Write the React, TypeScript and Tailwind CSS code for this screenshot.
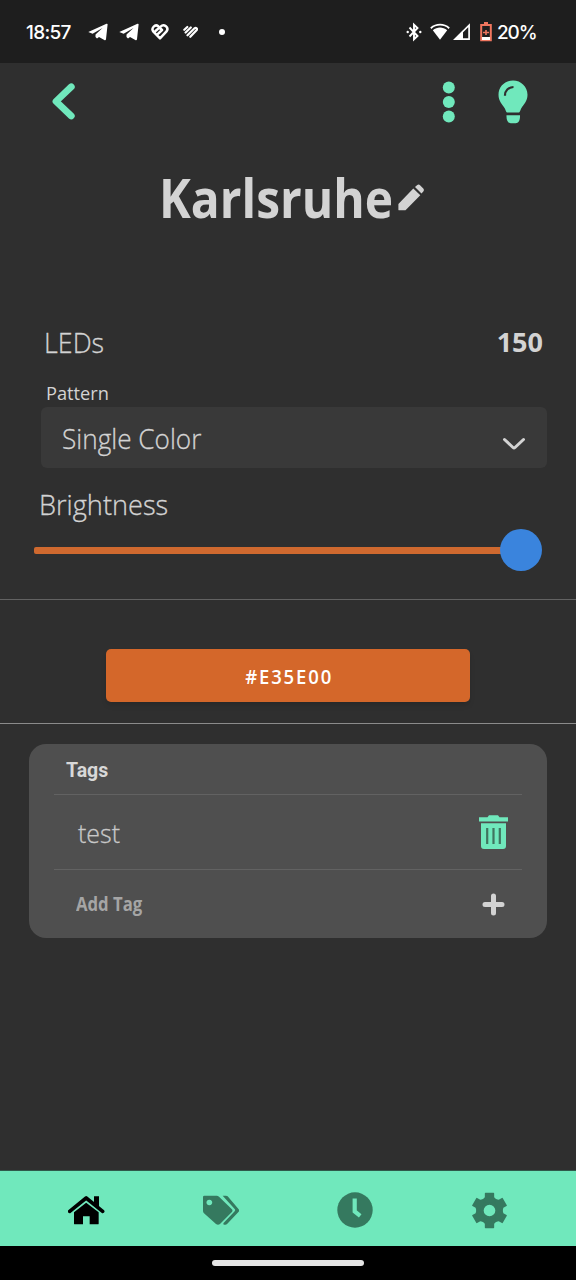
import React from "react";

const Telegram = () => (
  <svg className="h-[18px] w-[20px] shrink-0" viewBox="0 0 20 18" fill="#fff">
    <path d="M.3 9 18.500.8c.8-.3 1.200.2 1.100.8L18 16.300c-.2 1-1 1.200-1.700.7L11 14 9 15.500 7.500 14V11.500L14.500 5 4.600 10.800Z" />
  </svg>
);

function StatusBar() {
  return (
    <header className="flex h-[63px] shrink-0 items-center bg-[#1e1e1e] pl-[26px] pt-px font-['Inter'] text-[19px] font-medium leading-none text-white">
      <span className="w-[62px] tracking-[-0.7px]">18:57</span>
      <Telegram />
      <div className="w-[11px]" />
      <Telegram />
      <svg className="ml-[12px] h-[18px] w-[18px]" viewBox="0 0 18 18" fill="none" stroke="#fff" strokeWidth="2.500" strokeLinecap="round" strokeLinejoin="round">
        <path d="M9 15.300 2.400 8.700C-.3 5.300 4 .7 7.300 3.300L11 7 7 10.800M4.500 8 9.600 3.600c3.400-3.300 8.800 1 5.900 4.800L9 15.300" />
      </svg>
      <svg className="ml-[14px] h-[14px] w-[15px]" viewBox="0 0 15 14" fill="none" stroke="#fff" strokeWidth="2.200" strokeLinecap="round">
        <path d="M1.300 4.800 4.300 2M2.600 7.500 7.800 2.500M4.500 10.300 11.500 3.300c1.600-1.200 3.200.6 2 2L7.300 11.800" />
      </svg>
      <span className="ml-[21px] h-[6px] w-[6px] rounded-full bg-white" />
      <svg className="ml-[181px] h-[20px] w-[16px]" viewBox="0 0 16 20" fill="none" stroke="#fff" strokeWidth="1.900">
        <path d="m3.500 5.500 8 8.500L8 17.300V2.700L11.500 6l-8 8.500" />
        <circle cx="1.700" cy="10" r="1.200" fill="#fff" stroke="none" />
        <circle cx="14.300" cy="10" r="1.200" fill="#fff" stroke="none" />
      </svg>
      <svg className="ml-[8px] h-[18px] w-[20px]" viewBox="0 0 20 18">
        <path d="M.8 5.200c5.500-4.700 13-4.700 18.400 0" fill="none" stroke="#fff" strokeWidth="1.800" />
        <path d="M2.800 7.200c4.500-3.500 9.900-3.500 14.400 0L10 16.800Z" fill="#fff" />
      </svg>
      <svg className="ml-[3px] h-[18px] w-[17px]" viewBox="0 0 17 18">
        <path d="M2 16.200H16.100V2.200Z" fill="none" stroke="#fff" strokeWidth="1.700" />
        <path d="M1 16.800 10 7.500v9.300Z" fill="#fff" />
      </svg>
      <svg className="ml-[10px] h-[20px] w-[12px]" viewBox="0 0 12 20">
        <path d="M4 1h4M1.200 3h9.600v15.200H1.200Z" fill="none" stroke="#ef765f" strokeWidth="2" />
        <path d="M2 15h8v3H2Z" fill="#fff" />
        <path d="M3 10.500h6M6 8v5" stroke="#ef765f" strokeWidth="1.600" />
      </svg>
      <span className="ml-[5px] tracking-[-1.100px]">20%</span>
    </header>
  );
}

function Toolbar() {
  return (
    <div className="flex h-[77px] shrink-0 items-center pl-[50px]">
      <svg className="mb-px h-[40px] w-[27px]" viewBox="0 0 27 40" fill="none" stroke="#70e8bc" strokeWidth="6.800" strokeLinecap="round" strokeLinejoin="round">
        <path d="M21.300 5.800 6 20.400 21.300 35" />
      </svg>
      <svg className="ml-[365px] h-[42px] w-[14px]" viewBox="0 0 14 42" fill="#70e8bc">
        <circle cx="6.800" cy="6.500" r="6" />
        <circle cx="6.800" cy="21" r="6" />
        <circle cx="6.800" cy="35.500" r="6" />
      </svg>
      <svg className="ml-[42px] h-[44px] w-[30px]" viewBox="0 0 30 44">
        <path d="M15 .5C6.800.5.5 6.800.5 14.700c0 6.500 3.700 9.300 6.500 14 .9 1.900 1 3.800 2.300 3.800h11.400c1.300 0 1.400-1.900 2.300-3.800 2.800-4.700 6.500-7.500 6.500-14C29.500 6.800 23.200.5 15 .5ZM8.500 35.200h13.500c.3 5-1.600 8-4.300 8h-5c-2.700 0-4.500-3-4.200-8Z" fill="#70e8bc" />
        <path d="M7 15.800c-.2-5 3.500-8.600 8.500-8.800" fill="none" stroke="#2f2f2f" strokeWidth="2.200" />
      </svg>
    </div>
  );
}

function TagsCard() {
  return (
    <section className="ml-[29px] mt-[20px] flex h-[194px] w-[518px] shrink-0 flex-col rounded-[17px] bg-[#4f4f4f] px-[25px]">
      <div className="flex h-[51px] items-center border-b border-[#626262] pl-[12px] pt-[4px] font-['Roboto'] text-[19.500px] font-bold text-[#d8d8d8]">
        <span>Tags</span>
      </div>
      <div className="flex h-[75px] items-center justify-between border-b border-[#626262] pl-[24px] pr-[13px]">
        <span className="mt-px origin-left scale-x-[0.96] text-[26px] font-light text-[#c8c8c8] [-webkit-text-stroke:0.300px_#c8c8c8]">test</span>
        <svg className="mb-[1px] h-[34px] w-[31px]" viewBox="0 0 31 34">
          <path d="M1 2.300h8.500L11 .3h9l1.500 2H30V6.500H1ZM3 8.300h25V31q0 3-3 3H6q-3 0-3-3Z" fill="#70e8bc" />
          <path d="M9.200 13v16M15.500 13v16M21.800 13v16" stroke="#40745f" strokeWidth="2.200" />
        </svg>
      </div>
      <div className="flex h-[68px] items-center justify-between pl-[22px] pr-[17px]">
        <span className="mt-px origin-left scale-x-[0.88] text-[19px] font-bold text-[#a5a5a5]">Add Tag</span>
        <svg className="h-[23px] w-[23px]" viewBox="0 0 23 23" stroke="#d3d3d3" strokeWidth="5">
          <path d="M3 11.500h17M11.500 3v17" strokeLinecap="round" />
        </svg>
      </div>
    </section>
  );
}

const GEAR_ANGLES = [0, 60, 120, 180, 240, 300];

function TabBar() {
  return (
    <nav className="flex h-[76px] shrink-0 items-center border-t border-[#2f5a4b] bg-[#70e8bc] pl-[68px] pt-[3px] text-[#35795f]">
      <svg className="h-[30px] w-[37px] text-black" viewBox="0 0 111 90">
        <path d="M5 49 54.500 9 104 49" fill="none" stroke="currentColor" strokeWidth="11" strokeLinecap="round" strokeLinejoin="round" />
        <path d="M78 4h15v34L78 26ZM18 52 54.500 23 92 52v34q0 2-3 2H65V64H45v24H21q-3 0-3-2Z" fill="currentColor" />
      </svg>
      <svg className="ml-[97px] h-[30px] w-[37px]" viewBox="0 0 111 90" fill="currentColor">
        <path fillRule="evenodd" d="M3 6q0-4 4-4h37q4 0 7 3l38 37q5 5 0 10L54 87q-6 5-12 0L6 55q-3-3-3-7ZM22 14a8.500 8.500 0 1 0 .1 0Z" />
        <path d="M62 2h10q3 0 5 2l33 39q3 4 0 7L76 86q-3 3-6 3h-5l-1-4 34-36q3-4 0-7Z" />
      </svg>
      <svg className="ml-[98px] h-[36px] w-[36px]" viewBox="0 0 36 36">
        <circle cx="18" cy="18" r="17.700" fill="currentColor" />
        <path d="M17.700 6.500v13l5.500 4.300" fill="none" stroke="#70e8bc" strokeWidth="4.200" />
      </svg>
      <svg className="ml-[98px] h-[37px] w-[37px]" viewBox="-55.500 -55.500 111 111">
        <circle r="28" fill="none" stroke="currentColor" strokeWidth="21" />
        {GEAR_ANGLES.map((angle) => (
          <path key={angle} d="M-14-51q0-2 2-2h24q2 0 2 2v11l7 7-10 8H-11l-10-8 7-7Z" fill="currentColor" transform={`rotate(${angle})`} />
        ))}
      </svg>
    </nav>
  );
}

export default function App() {
  return (
    <div className="flex h-[1280px] w-[576px] flex-col overflow-hidden bg-[#2f2f2f] font-['Open_Sans','Noto_Sans',sans-serif] leading-none text-[#d3d3d3]">
      <StatusBar />
      <Toolbar />
      <div className="flex h-[177px] shrink-0 items-start pl-[159px] pt-[31px]">
        <h1 className="-mt-px w-[239px] origin-left scale-x-[0.888] whitespace-nowrap text-[54px] font-bold leading-[54px]">Karlsruhe</h1>
        <svg className="mt-[13px] h-[28px] w-[27px] shrink-0" viewBox="0 0 27 28" fill="#d3d3d3">
          <path d="M.4 26v-6L15.300 4.500l7 6.700L7.500 26.200H.8ZM17 3l2-1.800q1.700-1.300 3.300.2l3 3q1.200 1.500 0 3.100L23.500 9.500Z" />
        </svg>
      </div>
      <div className="flex h-[50px] shrink-0 items-center justify-between pl-[44px] pr-[33px]">
        <span className="origin-left scale-x-[0.96] text-[28px] font-light [-webkit-text-stroke:0.300px_#d3d3d3]">LEDs</span>
        <span className="-mt-px text-[27px] font-bold">150</span>
      </div>
      <label className="flex h-[40px] shrink-0 items-end pb-[4px] pl-[46px]">
        <span className="origin-left scale-x-[0.96] text-[19px] leading-[20px]">Pattern</span>
      </label>
      <div className="ml-[41px] flex h-[61px] w-[506px] shrink-0 items-center justify-between rounded-[6px] bg-[#393939] pl-[21px] pr-[21px]">
        <span className="origin-left scale-x-[0.935] text-[28px] font-light [-webkit-text-stroke:0.300px_#d3d3d3]">Single Color</span>
        <svg className="mt-[13px] h-[14px] w-[24px]" viewBox="0 0 24 14" fill="none" stroke="#d3d3d3" strokeWidth="3" strokeLinecap="round" strokeLinejoin="round">
          <path d="m2.500 2.500 8.500 8q1 .9 2 0l8.500-8" />
        </svg>
      </div>
      <div className="flex h-[62px] shrink-0 items-center pl-[39px] pt-[9px]">
        <span className="origin-left scale-x-[0.97] text-[28px] font-light [-webkit-text-stroke:0.300px_#d3d3d3]">Brightness</span>
      </div>
      <div className="flex h-[40px] shrink-0 items-center pl-[34px]">
        <div className="h-[7px] w-[467px] rounded-l-[2px] bg-[#cf692f]" />
        <div className="-ml-px h-[42px] w-[42px] shrink-0 rounded-full bg-[#3a84dd]" />
      </div>
      <div className="mt-[29px] h-px shrink-0 bg-[#626262]" />
      <button className="ml-[106px] mt-[49px] flex h-[53px] w-[364px] shrink-0 items-center justify-center rounded-[5px] bg-[#d4672a] pl-[2px] pt-[3px] text-[19px] font-semibold tracking-[1.900px] text-white shadow-md">
        <span className="scale-x-[0.975]">#E35E00</span>
      </button>
      <div className="mt-[21px] h-px shrink-0 bg-[#8b8b8b]" />
      <TagsCard />
      <div className="flex-1" />
      <TabBar />
      <div className="flex h-[34px] shrink-0 items-center justify-center bg-black">
        <div className="h-[6px] w-[152px] rounded-full bg-[#e5e5e5]" />
      </div>
    </div>
  );
}
